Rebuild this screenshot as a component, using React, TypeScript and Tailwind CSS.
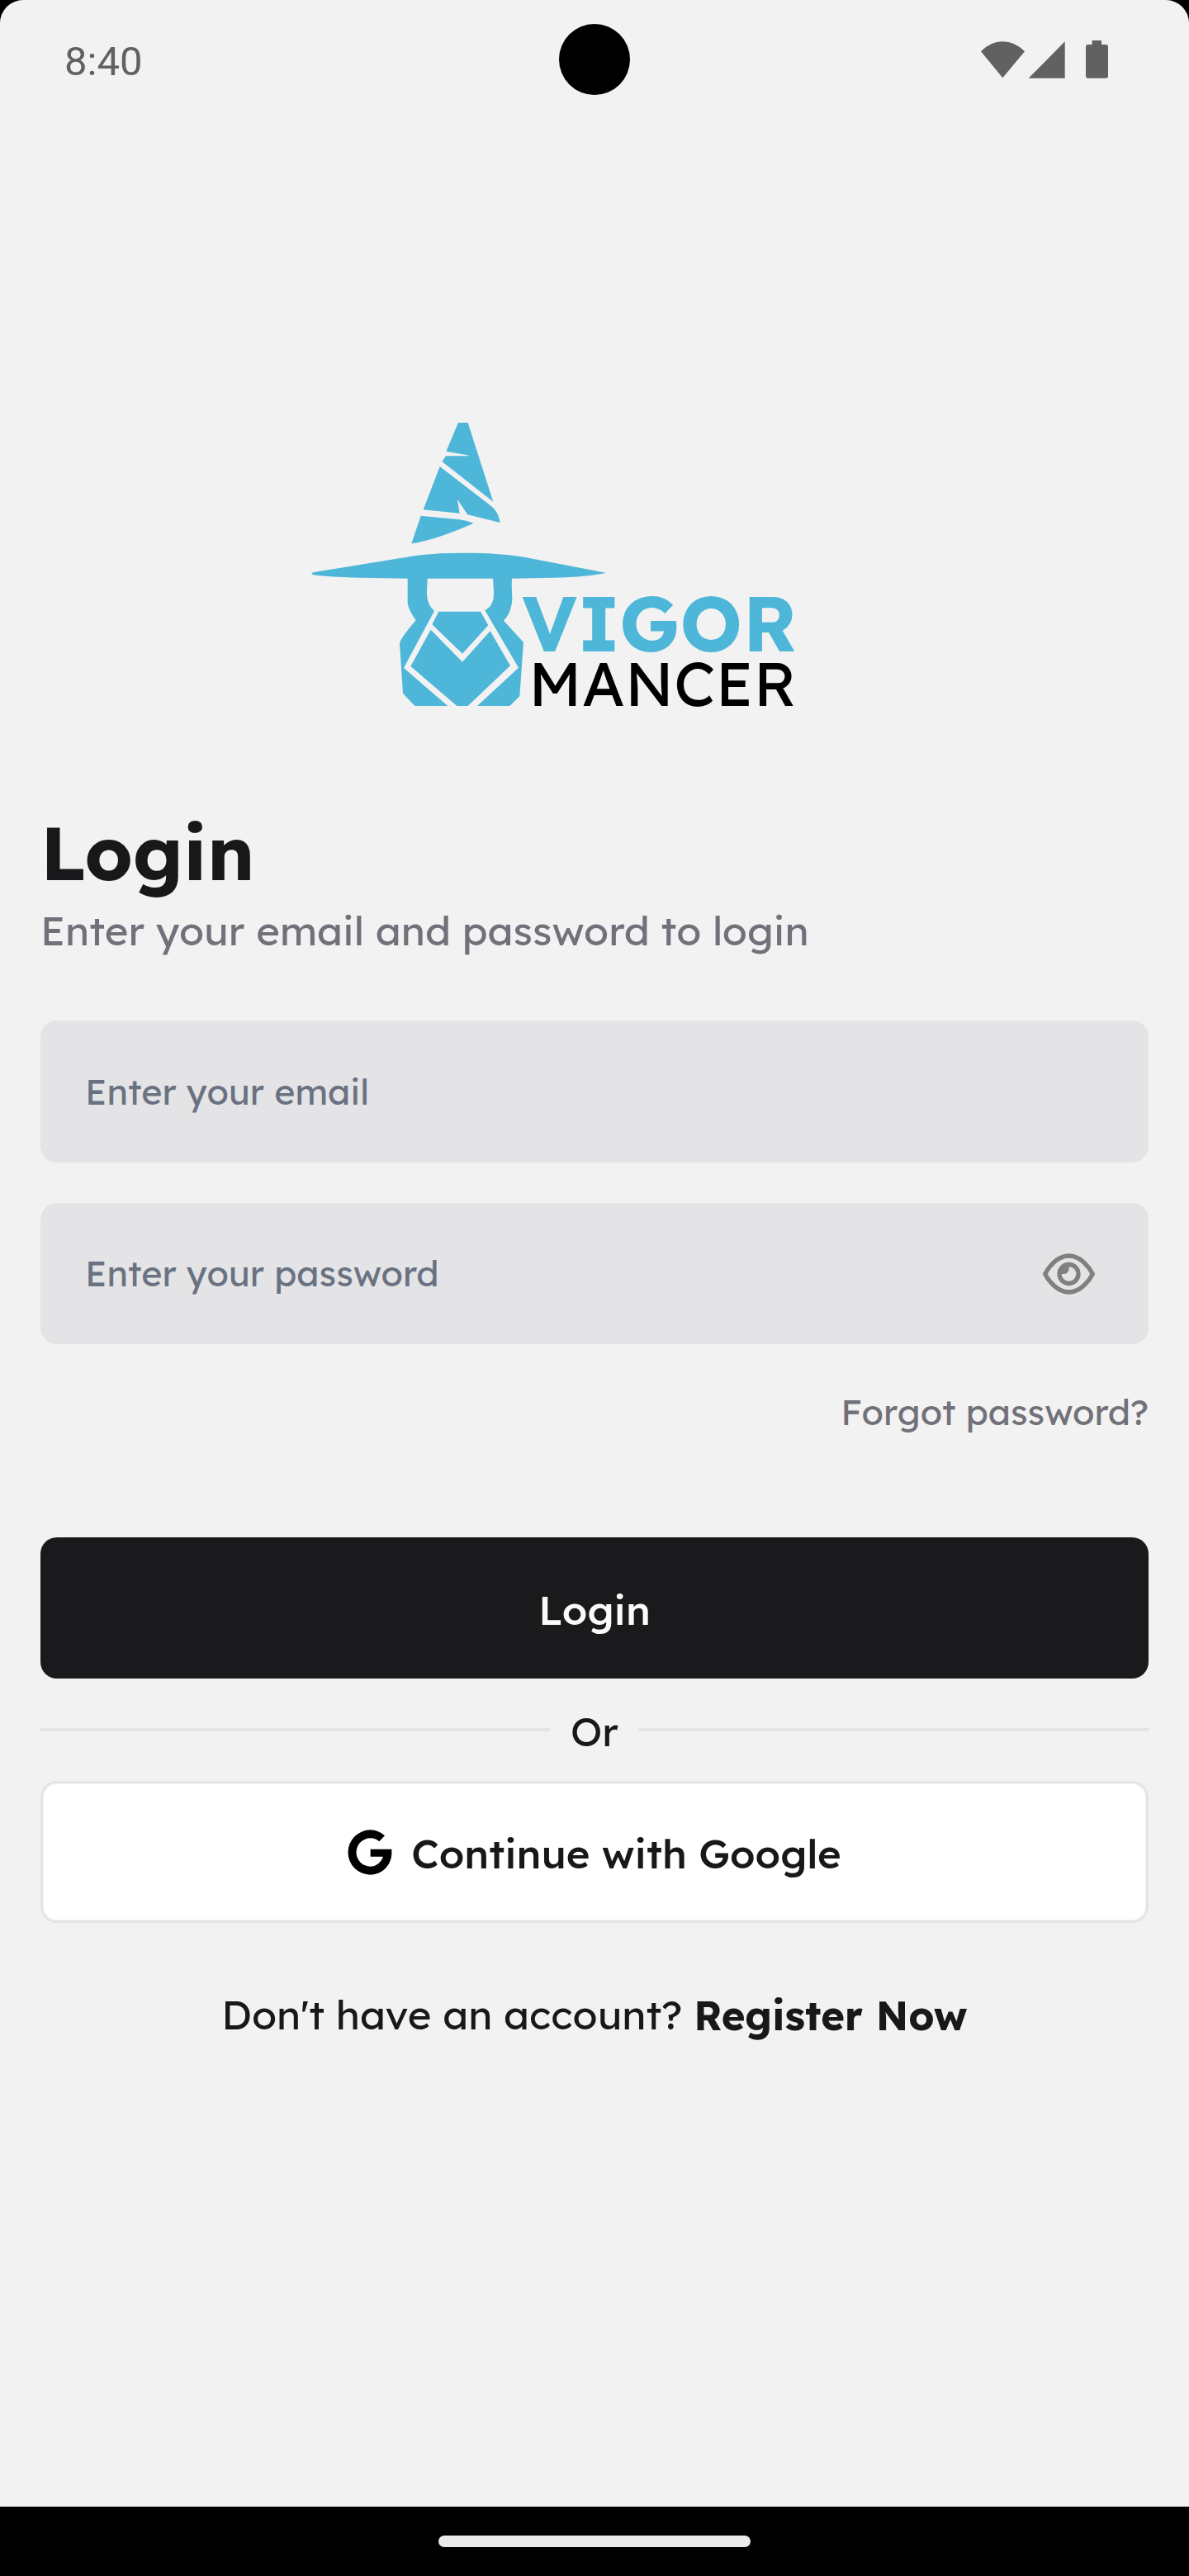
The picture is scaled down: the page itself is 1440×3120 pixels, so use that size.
import type { ReactNode } from "react";

function StatusBar() {
  return (
    <div className="relative flex h-[146px] shrink-0 items-center justify-between pl-[78px] pr-[98px] text-[#616161]">
      <span className="pt-[3px] font-[Roboto,sans-serif] text-[49px] leading-[58px]">8:40</span>
      <div className="absolute left-1/2 top-[29px] size-[86px] -translate-x-1/2 rounded-full bg-black" />
      <svg className="mb-[2px] h-[46px] w-[154px]" viewBox="54 147 462 138" fill="currentColor">
        <path d="M54 187Q88 151 133 151T213 187L133 283Z" />
        <path d="M359 151V284H227Z" />
        <path d="M458 147H492V162H508Q516 162 516 170V276Q516 284 508 284H443Q435 284 435 276V170Q435 162 443 162H458Z" />
      </svg>
    </div>
  );
}

function Logo() {
  return (
    <svg
      className="ml-[360px] mt-[354px] h-[380px] w-[640px] shrink-0"
      viewBox="0 0 1920 1140"
      role="img"
      aria-label="Vigor Mancer"
    >
      <g fill="#4eb7d9">
        <path d="M585 36H620L712 323L526 177L540 157H620Q626 156 618 154L541 140Z" />
        <path d="M518 195L700 335Q732 358 737 399L619 370Q600 342 582 314L590 365L458 352Z" />
        <path d="M449 374L590 388Q612 391 641 401Q500 463 415 475Z" />
        <path d="M54 582Q58 579 66 578L370 529C450 513 520 509 600 509C690 509 760 512 840 527L1121 581Q1060 596 930 599L780 602C777 650 785 672 778 700Q771 735 750 755L822 834L808 1030L772 1065H654L804 926L682 718C715 700 714 670 714 650L711 602H473L471 655Q470 695 498 720L387 927L547 1065H427L384 1019L372 840Q373 830 380 820Q395 795 431 754Q402 712 401 690V602L230 599Q100 596 56 588Q50 586 54 582Z" />
        <path d="M514 722H666L694 772L600 875L490 769Z" />
        <path d="M485 788L600 905L701 793L774 919L620 1065H580L412 921Z" />
        <text x="817" y="867" fontSize="281" fontWeight="700" textLength="999" className="font-[Lexend,Inter,sans-serif]">
          VIGOR
        </text>
      </g>
      <text x="841" y="1065" fontSize="223" fontWeight="400" textLength="972" className="font-[Lexend,Inter,sans-serif]">
        MANCER
      </text>
    </svg>
  );
}

function EyeIcon() {
  return (
    <svg className="h-[50px] w-[63px]" viewBox="849 234 189 150" fill="none" stroke="#808080" strokeWidth="16">
      <path
        strokeLinejoin="round"
        d="M857 309C868 287 900 243 943.500 243S1019 287 1030 309C1019 331 987 375 943.500 375S868 331 857 309Z"
      />
      <circle cx="943.500" cy="309" r="34.500" />
      <path stroke="none" fill="#808080" d="M944 281V290Q942 307 926 309H914L911 295L928 278Z" />
    </svg>
  );
}

function GoogleIcon() {
  return (
    <svg className="h-[55px] w-[54px]" viewBox="59 226 162 165">
      <path d="M219 297H142V324H188A50 50 0 0 1 142 360A51.500 51.500 0 0 1 142 257A52 52 0 0 1 174 269L194 248A81 81 0 0 0 142 227A81.500 81.500 0 0 0 142 390A78 78 0 0 0 219 308Z" />
    </svg>
  );
}

function Field({ className, label, children }: { className: string; label: string; children?: ReactNode }) {
  return (
    <div className={`flex items-center justify-between rounded-[20px] bg-[#e4e4e6] pl-[54px] pr-[65px] text-[43px] text-gray-500 ${className}`}>
      <span>{label}</span>
      {children}
    </div>
  );
}

export default function App() {
  return (
    <div className="h-[3120px] w-[1440px] overflow-hidden bg-black font-[Lexend,Inter,sans-serif]">
      <div className="flex h-[3036px] flex-col rounded-t-[28px] bg-[#f2f2f2] text-[#18181b]">
        <StatusBar />
        <Logo />
        <main className="flex flex-col px-[49px] pt-[97px]">
          <h1 className="text-[91px] font-bold leading-[110px]">Login</h1>
          <p className="mt-[5px] text-[49px] leading-[70px] text-[#71717a]">Enter your email and password to login</p>
          <Field className="mt-[74px] h-[172px]" label="Enter your email" />
          <Field className="mt-[49px] h-[171px]" label="Enter your password">
            <EyeIcon />
          </Field>
          <a className="mt-[52px] text-right text-[43px] leading-[60px] text-[#71717a]">Forgot password?</a>
          <button className="mt-[122px] flex h-[171px] items-center justify-center rounded-[20px] bg-[#1a1a1c] pt-1 text-[49px] font-medium text-[#fafafa]">
            Login
          </button>
          <div className="flex h-[124px] items-center">
            <div className="h-1 flex-1 bg-[#e4e4e4]" />
            <span className="px-[25px] pt-[3px] text-[49px]">Or</span>
            <div className="h-1 flex-1 bg-[#e4e4e4]" />
          </div>
          <button className="flex h-[172px] items-center justify-center gap-[23px] rounded-[20px] border-[3px] border-[#e4e4e4] bg-white text-[49px] font-medium shadow-[inset_0_0_0_1px_#f4f4f4]">
            <GoogleIcon />
            <span className="pt-[3px]">Continue with Google</span>
          </button>
          <p className="mt-[76px] flex justify-center gap-[14px] text-[49px] leading-[70px]">
            <span>Don't have an account?</span>
            <span className="pt-px font-bold">Register Now</span>
          </p>
        </main>
      </div>
      <div className="flex h-[84px] items-center justify-center">
        <div className="h-[14px] w-[378px] rounded-full bg-[#ebebeb]" />
      </div>
    </div>
  );
}
